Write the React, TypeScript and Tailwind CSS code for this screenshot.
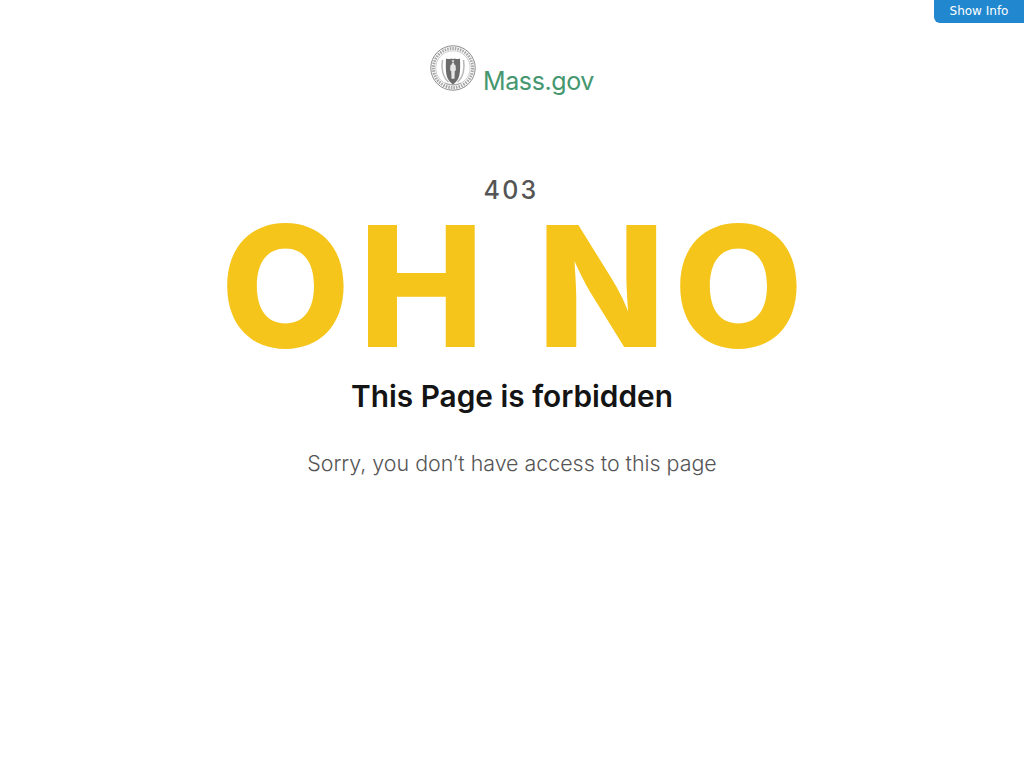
function Seal() {
  return (
    <svg width="46" height="46" viewBox="0 0 46 46" className="block">
      <circle cx="23" cy="23" r="22.2" fill="#fff" stroke="#8a8a8a" strokeWidth="1" />
      <circle cx="23" cy="23" r="19.6" fill="none" stroke="#a8a8a8" strokeWidth="3" strokeDasharray="1.6 1" />
      <circle cx="23" cy="23" r="17.2" fill="#fff" stroke="#aaa" strokeWidth="0.6" />
      <path d="M12.500 15c-1.500 8 0 17 6 22M33.500 15c1.500 8 0 17-6 22" fill="none" stroke="#b8b8b8" strokeWidth="1.500" />
      <path d="M16 13.500c2 .8 4 .8 5 0 1 .6 3 .6 4 0 1 .8 3 .8 5 0 .3 9 .3 15-1.500 19.500-1.200 3-3.500 5-5.500 6.500-2-1.500-4.300-3.500-5.500-6.500-1.800-4.500-1.800-10.500-1.500-19.500z" fill="#6b6b6b" />
      <path d="M23 18c.9 0 1.400.7 1.300 1.600l1.300.9.300 5-1.100.2-.3 8h-3l-.3-8-1.100-.2.3-5 1.300-.9C21.600 18.700 22.100 18 23 18z" fill="#e6e6e6" />
      <path d="M23 14.500l.5 1.100 1.200.1-.9.8.3 1.200-1.100-.7-1.100.7.3-1.200-.9-.8 1.200-.1z" fill="#ddd" />
      <path d="M15 38c4.500 2.200 11.500 2.200 16 0" fill="none" stroke="#999" strokeWidth="0.900" />
    </svg>
  );
}

export default function App() {
  return (
    <div className="relative h-[768px] overflow-hidden bg-white font-['Inter',sans-serif]">
      <button className="absolute right-0 top-0 h-[23px] w-[90px] rounded-bl-[6px] bg-[#2188cf] pb-[2px] font-['DejaVu_Sans',sans-serif] text-[12px] leading-[20px] text-white">
        Show Info
      </button>
      <div className="flex flex-col items-center pt-[45px]">
        <div className="flex h-[52px] items-start gap-[7px]">
          <Seal />
          <span className="mt-[20px] text-[25px] leading-[32px] tracking-[-0.4px] text-[#45976f]">Mass.gov</span>
        </div>
        <div className="mt-[81px] h-[33px] pr-[2px] text-[25px] font-medium leading-[24px] tracking-[0.09em] text-[#555]">403</div>
        <h1 className="whitespace-nowrap pl-[8px] text-[168px] font-extrabold leading-[150px] tracking-[8px] text-[#f6c51b]">OH NO</h1>
        <h2 className="mt-[17px] text-[29.8px] font-semibold leading-[36px] text-[#141414]">This Page is forbidden</h2>
        <p className="mt-[33px] text-[21.4px] font-light leading-[32px] text-[#555]">Sorry, you don’t have access to this page</p>
      </div>
    </div>
  );
}
